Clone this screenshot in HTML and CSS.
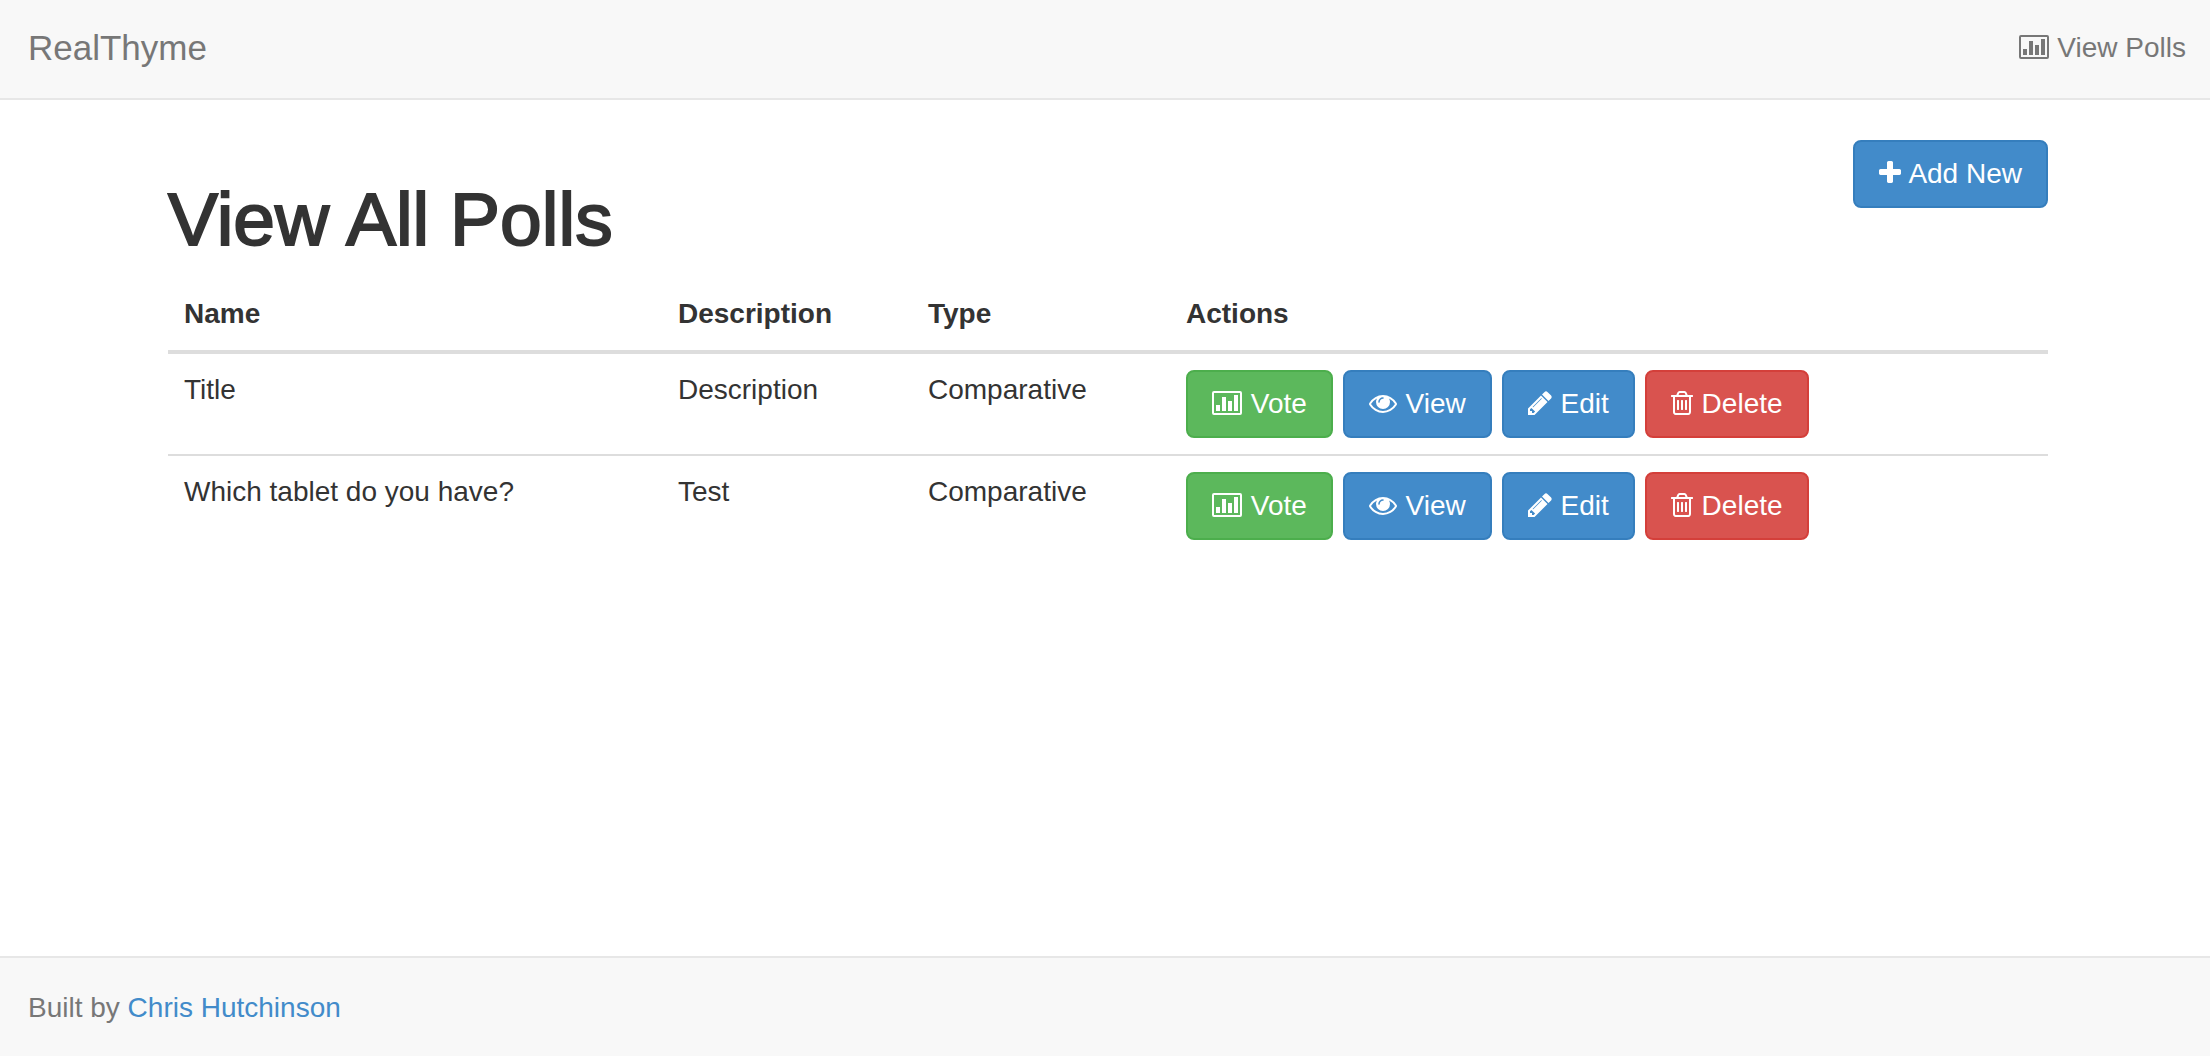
FILE: index.html
```html
<!DOCTYPE html>
<html lang="en">
<head>
<meta charset="utf-8">
<title>RealThyme</title>
<link rel="stylesheet" href="styles.css">
</head>
<body>
<svg class="sprite" aria-hidden="true">
  <symbol id="chart" viewBox="0 0 30 28">
    <rect x="1" y="3" width="28" height="22" rx="1" fill="none" stroke="currentColor" stroke-width="2"/>
    <path d="M4 16h4v6h-4zM10 8h4v14h-4zM16 12h4v10h-4zM22 6h4v16h-4z"/>
  </symbol>
  <symbol id="eye" viewBox="0 -1536 1792 1792">
    <path transform="scale(1,-1)" d="M1664 576q-152 236 -381 353q61 -104 61 -225q0 -185 -131.5 -316.5t-316.5 -131.5t-316.5 131.5t-131.5 316.5q0 121 61 225q-229 -117 -381 -353q133 -205 333.5 -326.5t434.5 -121.5t434.5 121.5t333.5 326.5zM944 960q0 20 -14 34t-34 14q-125 0 -214.5 -89.5t-89.5 -214.5q0 -20 14 -34t34 -14t34 14t14 34q0 86 61 147t147 61q20 0 34 14t14 34zM1792 576q0 -34 -20 -69q-140 -230 -376.5 -368.5t-499.5 -138.5t-499.5 139t-376.5 368q-20 35 -20 69t20 69q140 229 376.5 368t499.5 139t499.5 -139t376.5 -368q20 -35 20 -69z"/>
  </symbol>
  <symbol id="pencil" viewBox="0 -1536 1536 1792">
    <path transform="scale(1,-1)" d="M363 0l91 91l-235 235l-91 -91v-107h128v-128h107zM886 928q0 22 -22 22q-10 0 -17 -7l-542 -542q-7 -7 -7 -17q0 -22 22 -22q10 0 17 7l542 542q7 7 7 17zM832 1120l416 -416l-832 -832h-416v416zM1515 1024q0 -53 -37 -90l-166 -166l-416 416l166 165q36 38 90 38q53 0 91 -38l235 -234q37 -39 37 -91z"/>
  </symbol>
  <symbol id="trash" viewBox="0 -1536 1408 1792">
    <path transform="scale(1,-1)" d="M512 800v-576q0 -14 -9 -23t-23 -9h-64q-14 0 -23 9t-9 23v576q0 14 9 23t23 9h64q14 0 23 -9t9 -23zM768 800v-576q0 -14 -9 -23t-23 -9h-64q-14 0 -23 9t-9 23v576q0 14 9 23t23 9h64q14 0 23 -9t9 -23zM1024 800v-576q0 -14 -9 -23t-23 -9h-64q-14 0 -23 9t-9 23v576q0 14 9 23t23 9h64q14 0 23 -9t9 -23zM1152 76v948h-896v-948q0 -22 7 -40.5t14.5 -27t10.5 -8.5h832q3 0 10.5 8.5t14.5 27t7 40.5zM480 1152h448l-48 117q-7 9 -17 11h-317q-10 -2 -17 -11zM1408 1120v-64q0 -14 -9 -23t-23 -9h-96v-948q0 -83 -47 -143.5t-113 -60.5h-832q-66 0 -113 58.5t-47 141.5v952h-96q-14 0 -23 9t-9 23v64q0 14 9 23t23 9h309l70 167q15 37 54 63t79 26h320q40 0 79 -26t54 -63l70 -167h309q14 0 23 -9t9 -23z"/>
  </symbol>
  <symbol id="plus" viewBox="0 -1536 1408 1792">
    <path transform="scale(1,-1)" d="M1408 800v-192q0 -40 -28 -68t-68 -28h-416v-416q0 -40 -28 -68t-68 -28h-192q-40 0 -68 28t-28 68v416h-416q-40 0 -68 28t-28 68v192q0 40 28 68t68 28h416v416q0 40 28 68t68 28h192q40 0 68 -28t28 -68v-416h416q40 0 68 -28t28 -68z"/>
  </symbol>
</svg>

<header class="navbar">
  <a class="brand" href="#">RealThyme</a>
  <nav><a class="nav-link" href="#"><svg class="icon icon-chart"><use href="#chart"/></svg> View Polls</a></nav>
</header>

<main class="content">
  <div class="page-head">
    <h1>View All Polls</h1>
    <button class="btn btn-primary" type="button"><svg class="icon icon-narrow"><use href="#plus"/></svg> Add New</button>
  </div>
  <table class="polls">
    <colgroup>
      <col class="col-name">
      <col class="col-description">
      <col class="col-type">
      <col>
    </colgroup>
    <thead>
      <tr><th scope="col">Name</th><th scope="col">Description</th><th scope="col">Type</th><th scope="col">Actions</th></tr>
    </thead>
    <tbody>
      <tr>
        <td>Title</td>
        <td>Description</td>
        <td>Comparative</td>
        <td>
          <div class="actions">
            <button class="btn btn-success" type="button"><svg class="icon icon-chart"><use href="#chart"/></svg> Vote</button>
            <button class="btn btn-primary" type="button"><svg class="icon icon-eye"><use href="#eye"/></svg> View</button>
            <button class="btn btn-primary" type="button"><svg class="icon icon-pencil"><use href="#pencil"/></svg> Edit</button>
            <button class="btn btn-danger" type="button"><svg class="icon icon-narrow"><use href="#trash"/></svg> Delete</button>
          </div>
        </td>
      </tr>
      <tr>
        <td>Which tablet do you have?</td>
        <td>Test</td>
        <td>Comparative</td>
        <td>
          <div class="actions">
            <button class="btn btn-success" type="button"><svg class="icon icon-chart"><use href="#chart"/></svg> Vote</button>
            <button class="btn btn-primary" type="button"><svg class="icon icon-eye"><use href="#eye"/></svg> View</button>
            <button class="btn btn-primary" type="button"><svg class="icon icon-pencil"><use href="#pencil"/></svg> Edit</button>
            <button class="btn btn-danger" type="button"><svg class="icon icon-narrow"><use href="#trash"/></svg> Delete</button>
          </div>
        </td>
      </tr>
    </tbody>
  </table>
</main>

<footer class="footer">Built by <a href="#">Chris Hutchinson</a></footer>
</body>
</html>
```
FILE: styles.css
```css
* {
  box-sizing: border-box;
}

body {
  margin: 0;
  min-height: 100vh;
  display: flex;
  flex-direction: column;
  background: #fff;
  color: #333;
  font-family: "Liberation Sans", Arial, sans-serif;
  font-size: 28px;
  line-height: 40px;
}

.sprite {
  display: none;
}

a {
  color: #428bca;
  text-decoration: none;
}

.navbar {
  display: flex;
  justify-content: space-between;
  padding: 28px 24px 30px 28px;
  background: #f8f8f8;
  border-bottom: 2px solid #e7e7e7;
}

.brand {
  color: #777;
  font-size: 35px;
}

.nav-link {
  color: #777;
}

.icon {
  height: 28px;
  margin-right: 1px;
  vertical-align: -4px;
  fill: currentColor;
}

.icon-chart {
  width: 30px;
}

.icon-eye {
  width: 28px;
}

.icon-pencil {
  width: 24px;
}

.icon-narrow {
  width: 22px;
}

.content {
  flex: 1;
  padding: 40px 162px 40px 168px;
}

.page-head {
  display: flex;
  justify-content: space-between;
  align-items: flex-start;
}

/* The stroke gives the regular face a medium weight. */
h1 {
  margin: 40px 0 20px;
  font-size: 75px;
  font-weight: 400;
  line-height: 78px;
  -webkit-text-stroke: 2px #333;
}

.btn {
  padding: 12px 24px;
  border: 2px solid;
  border-radius: 8px;
  color: #fff;
  font: inherit;
  white-space: nowrap;
  cursor: pointer;
}

.btn-primary {
  background: #428bca;
  border-color: #357ebd;
}

.btn-success {
  background: #5cb85c;
  border-color: #4cae4c;
}

.btn-danger {
  background: #d9534f;
  border-color: #d43f3a;
}

.polls {
  width: 100%;
  table-layout: fixed;
  border-spacing: 0;
}

.col-name {
  width: 494px;
}

.col-description {
  width: 250px;
}

.col-type {
  width: 258px;
}

th,
td {
  padding: 16px;
  text-align: left;
  vertical-align: top;
}

th {
  border-bottom: 4px solid #ddd;
}

tr + tr td {
  border-top: 2px solid #ddd;
}

.actions {
  display: flex;
  gap: 10px;
}

.footer {
  padding: 30px 28px 28px;
  background: #f8f8f8;
  border-top: 2px solid #e7e7e7;
  color: #777;
}
```
